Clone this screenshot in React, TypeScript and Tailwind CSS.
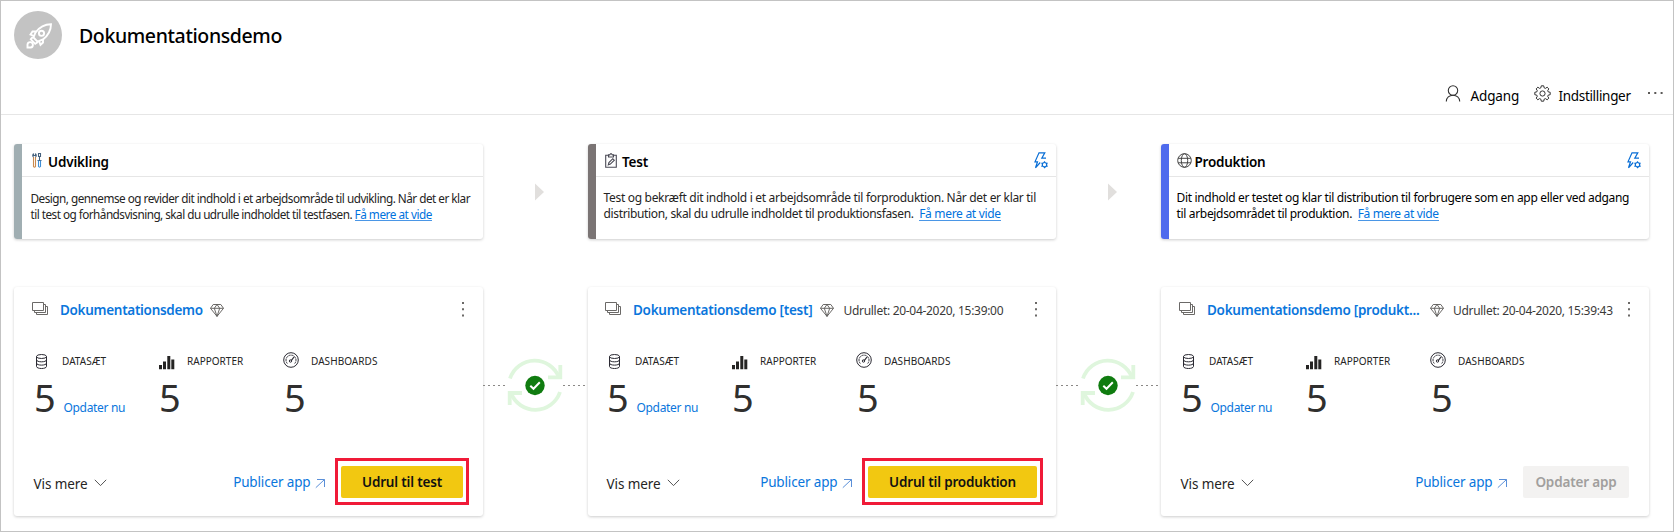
import type { ReactNode } from "react";

type Box = { className?: string };

const RocketIcon = () => (
  <svg width="26" height="26" viewBox="0 0 26 26" fill="none" stroke="#fff" strokeWidth="1.900" className="mt-px ml-px">
    <path d="M25 1.200C18.500 1.200 13.500 4 9.500 9.500L7.500 14.500L11.500 18.700L17 16.500C22.500 12 25 7 25 1.200Z" />
    <circle cx="15.500" cy="10.300" r="2.600" />
    <path d="M10.500 8.500H6.500L4.500 11.500L8 13M17 16.500V19.500L14.500 21.800L13 18" />
    <path d="M6.800 13.800L4.800 16.300L9.200 20.800L12 19" />
    <path d="M1.500 24.500V21.500A2.700 2.700 0 1 1 4.500 24.500Z" />
  </svg>
);

const PersonIcon = ({ className }: Box) => (
  <svg width="16" height="17" viewBox="0 0 16 17" fill="none" stroke="#333" strokeWidth="1.1" className={className}>
    <circle cx="8" cy="5.500" r="4.700" />
    <path d="M1.300 16.500C1.300 12.700 4.300 10.200 8 10.200S14.700 12.700 14.700 16.500" />
  </svg>
);

const GearIcon = ({ className }: Box) => (
  <svg width="17" height="17" viewBox="0 0 17 17" fill="none" stroke="#333" strokeWidth="1" className={className}>
    <path d="M7.300 0.800H9.700L10.200 2.900L11.400 3.400L13.200 2.200L14.800 3.900L13.700 5.700L14.100 6.800L16.200 7.300V9.700L14.100 10.200L13.700 11.300L14.800 13.100L13.200 14.800L11.400 13.600L10.200 14.100L9.700 16.200H7.300L6.800 14.100L5.600 13.600L3.800 14.800L2.200 13.100L3.300 11.300L2.900 10.200L0.800 9.700V7.300L2.900 6.800L3.300 5.700L2.200 3.900L3.800 2.200L5.600 3.400L6.800 2.900Z" />
    <circle cx="8.500" cy="8.500" r="2.600" />
  </svg>
);

const ToolsIcon = ({ className }: Box) => (
  <svg width="10" height="15" viewBox="0 0 10 15" fill="none" strokeWidth="1.100" className={className}>
    <path d="M1.500 4V13.500Q2.500 14.800 3.500 13.500V4" stroke="#c98a4e" />
    <path d="M1.500 0.500Q0 2.500 1.500 4.200M3.500 0.500Q5 2.500 3.500 4.200M1.500 0.500V2.500H3.500V0.500" stroke="#44617e" />
    <path d="M6.500 0.500H8.500V3.500H6.500ZM7.500 3.500V7.500M5.500 7.500H9.500" stroke="#44617e" />
    <path d="M6.500 7.500V13.500Q7.500 14.700 8.500 13.500V7.500" stroke="#3f8fd6" />
  </svg>
);

const ClipboardIcon = ({ className }: Box) => (
  <svg width="12" height="15" viewBox="0 0 12 15" fill="none" stroke="#4a4a55" strokeWidth="1.1" className={className}>
    <path d="M3.500 2.300H0.700V14.200H11.300V2.300H8.500" />
    <path d="M3.500 4V1.900H4.700Q6 -0.600 7.300 1.900H8.500V4Z" />
    <path d="M3.300 11.800L3.900 9.600L7.800 5.700L9.300 7.200L5.400 11.100Z" />
  </svg>
);

const GlobeIcon = ({ className }: Box) => (
  <svg width="15" height="15" viewBox="0 0 15 15" fill="none" stroke="#444" strokeWidth="1" className={className}>
    <circle cx="7.500" cy="7.500" r="6.800" />
    <ellipse cx="7.500" cy="7.500" rx="3.200" ry="6.800" />
    <path d="M1.200 5.300H13.800M1.200 9.800H13.800" />
  </svg>
);

const BoltGearIcon = () => (
  <svg width="15" height="17" viewBox="0 0 15 17" fill="none" stroke="#0a6fd6" strokeWidth="1.200" className="mt-2 mr-[7px]">
    <path d="M6.200 10.500L1.500 15.800L3.500 9.800H1L5 0.800H10.800L7.800 6.200H12" />
    <circle cx="10.500" cy="12.700" r="2.200" />
    <path d="M10.500 9.200V10.500M10.500 14.900V16.200M7.400 10.900L8.600 11.600M12.400 13.800L13.600 14.500M13.600 10.900L12.400 11.600M8.600 13.800L7.400 14.500" />
  </svg>
);

const LayersIcon = () => (
  <svg width="17" height="14" viewBox="0 0 17 14" fill="none" stroke="#6b6967" strokeWidth="1" className="mt-0.5">
    <path d="M0.500 0.500H11.500V8.500H0.500Z" />
    <path d="M11.500 2.500H13.500V10.500H2.500V8.500" />
    <path d="M13.500 4.500H15.500V12.500H4.500V10.500" />
  </svg>
);

const DiamondIcon = () => (
  <svg width="14" height="13" viewBox="0 0 14 13" fill="none" stroke="#5b5957" strokeWidth="0.900" strokeLinejoin="round" className="mt-1 block">
    <path d="M3.200 0.500H10.800L13.500 4.300L7 12.400L0.500 4.300ZM0.500 4.300H13.500M7 12.400L4.300 4.300L7 0.500L9.700 4.300Z" />
  </svg>
);

const DatabaseIcon = () => (
  <svg width="12" height="15" viewBox="0 0 12 15" fill="none" stroke="#2b2a33" strokeWidth="1" className="mt-px">
    <ellipse cx="5.500" cy="2.500" rx="5" ry="2" />
    <path d="M0.500 2.500V12.400C0.500 15.200 10.500 15.200 10.500 12.400V2.500M0.500 5.800C0.500 8.500 10.500 8.500 10.500 5.800M0.500 9.100C0.500 11.800 10.500 11.800 10.500 9.100" />
  </svg>
);

const BarsIcon = () => (
  <svg width="16" height="14" viewBox="0 0 16 14" fill="#252423" className="mt-[3px]">
    <path d="M0 9H3V13.300H0ZM4 5.500H7V13.300H4ZM8.300 0H11.300V13.300H8.300ZM12.300 3.500H15.300V13.300H12.300Z" />
  </svg>
);

const GaugeIcon = () => (
  <svg width="16" height="16" viewBox="0 0 16 16" fill="none" stroke="#2b2a33" strokeWidth="1" className="-mt-px -ml-px">
    <circle cx="8" cy="8" r="7.300" />
    <path d="M4.300 11.500A5 5 0 1 1 11.700 11.500" strokeDasharray="2.200 0.700" />
    <path d="M8 8.800L11 5" strokeWidth="1.200" />
    <circle cx="7.500" cy="9" r="1.200" />
  </svg>
);

const ChevronIcon = () => (
  <svg width="13" height="8" viewBox="0 0 13 8" fill="none" stroke="#555" strokeWidth="1" className="mt-[3px] -ml-px">
    <path d="M0.800 0.800L6.500 6.600L12.200 0.800" />
  </svg>
);

const OpenIcon = () => (
  <svg width="11" height="11" viewBox="0 0 11 11" fill="none" stroke="#5a8fd8" strokeWidth="1" className="mt-1 ml-1">
    <path d="M0.800 9.700L9.500 1.500M2 1.500H9.500V9" />
  </svg>
);

const Kebab = () => (
  <svg width="2" height="15" viewBox="0 0 2 15" fill="#6b6967" className="mt-[1.5px]">
    <path d="M0 0H2V2H0ZM0 6.300H2V8.300H0ZM0 12.600H2V14.600H0Z" />
  </svg>
);

const NextArrow = () => (
  <div className="flex w-[105px] shrink-0 pt-[39px] pl-[52px]">
    <svg width="9" height="18" viewBox="0 0 9 18" fill="#e1dfdd">
      <path d="M0 0.500L9 9L0 17.500Z" />
    </svg>
  </div>
);

const Dashes = () => (
  <svg width="24" height="1" viewBox="0 0 24 1" className="shrink-0">
    <path d="M0 0.500H22" stroke="#8a8886" strokeWidth="1" strokeDasharray="2 3" />
  </svg>
);

const SyncConnector = () => (
  <div className="flex h-14 w-[105px] shrink-0 items-center mt-[70px]">
    <Dashes />
    <svg width="56" height="56" viewBox="0 0 56 56" fill="none" className="shrink-0">
      <g stroke="#dff6dd" strokeWidth="3.800">
        <path d="M3 21.500A26 26 0 0 1 52 20.500" />
        <path d="M53.300 8V20.300H41" />
        <path d="M53 35A26 26 0 0 1 4 36" />
        <path d="M2.700 48V36H15" />
      </g>
      <circle cx="28" cy="28.500" r="9.700" fill="#107c10" />
      <path d="M23.300 28.700L26.500 31.800L32.800 25.300" stroke="#fff" strokeWidth="2" />
    </svg>
    <Dashes />
  </div>
);

type StageProps = {
  width: string;
  stripe: string;
  icon: ReactNode;
  title: ReactNode;
  auto?: boolean;
  body: string;
  children: ReactNode;
};

const StageCard = ({ width, stripe, icon, title, auto, body, children }: StageProps) => (
  <section className={`flex h-[95px] shrink-0 overflow-hidden rounded-[3px] bg-white shadow-[0_1px_3px_rgba(0,0,0,0.2)] ${width}`}>
    <div className={`w-2 shrink-0 ${stripe}`} />
    <div className="min-w-0 flex-1">
      <div className="flex h-[33px] justify-between border-b border-[#e6e6e6]">
        <div className="flex">
          {icon}
          <h2 className="mt-2 text-[13.5px] leading-5 font-[560] text-black">{title}</h2>
        </div>
        {auto && <BoltGearIcon />}
      </div>
      <div className={`pt-[13px] leading-4 whitespace-pre text-[#252423] ${body}`}>{children}</div>
    </div>
  </section>
);

const MoreLink = ({ className }: Box) => (
  <a className={`inline-block h-[15px] border-b border-[#4a96e6] align-top leading-4 text-[#0072dd] ${className}`}>Få mere at vide</a>
);

const Stat = ({ icon, iconBox, label, labelClass, children }: { icon: ReactNode; iconBox: string; label: string; labelClass: string; children?: ReactNode }) => (
  <div className="w-[125px]">
    <div className="flex h-6">
      <div className={`shrink-0 ${iconBox}`}>{icon}</div>
      <span className={`text-[10px] leading-[17px] text-[#252423] ${labelClass}`}>{label}</span>
    </div>
    <div className="flex">
      <span className="-ml-[2px] w-[29.5px] text-[38px] leading-10 font-[370] text-[#302f2e]">5</span>
      {children}
    </div>
  </div>
);

type WorkspaceProps = {
  width: string;
  indent: string;
  titleBox: string;
  title: ReactNode;
  deployed?: string;
  kebabBox: string;
  action: ReactNode;
};

const WorkspaceCard = ({ width, indent, titleBox, title, deployed, kebabBox, action }: WorkspaceProps) => (
  <section className={`flex h-[229px] shrink-0 flex-col rounded-[3px] bg-white shadow-[0_1px_3px_rgba(0,0,0,0.2)] ${width} ${indent}`}>
    <div className={`flex h-[66px] justify-between pt-[13px] ${kebabBox}`}>
      <div className="flex">
        <LayersIcon />
        <h3 className={`ml-[11px] text-[13.5px] leading-5 font-[560] whitespace-nowrap text-[#0a76dc] ${titleBox}`}>{title}</h3>
        <DiamondIcon />
        {deployed && <span className="ml-[9.500px] pt-px text-[12px] leading-5 tracking-[-0.3px] whitespace-nowrap text-[#3b3a39]">{deployed}</span>}
      </div>
      <Kebab />
    </div>
    <div className="flex pl-1">
      <Stat icon={<DatabaseIcon />} iconBox="w-[26px]" label="DATASÆT" labelClass="tracking-[0.03px]">
        <span className="pt-[23px] text-[12px] leading-4 tracking-[-0.33px] text-[#0a76dc]">Opdater nu</span>
      </Stat>
      <Stat icon={<BarsIcon />} iconBox="-ml-[2px] w-[28px]" label="RAPPORTER" labelClass="tracking-[0.02px]" />
      <Stat icon={<GaugeIcon />} iconBox="-ml-[2px] w-[27px]" label="DASHBOARDS" labelClass="tracking-[0.06px]" />
    </div>
    <div className="mt-[41px] flex h-[47px] items-center justify-between">
      <div className="flex items-center pl-[1.500px]">
        <span className="w-[61px] pt-1 text-[13.5px] leading-5 tracking-[-0.1px] text-[#252423]">Vis mere</span>
        <ChevronIcon />
      </div>
      <div className="flex items-center">
        <span className="text-[13.5px] leading-5 tracking-[-0.15px] text-[#0a76dc]">Publicer app</span>
        <OpenIcon />
        {action}
      </div>
    </div>
  </section>
);

const DeployButton = ({ className, children }: { className: string; children: ReactNode }) => (
  <div className={`ml-[9.500px] h-[47px] border-[3px] border-[#f01a38] pt-[5px] pl-[3px] ${className}`}>
    <button className="block h-8 w-[calc(100%-3px)] rounded-[2px] bg-[#f2c811] text-[13.5px] leading-8 font-[560] whitespace-nowrap text-[#111]">{children}</button>
  </div>
);

export default function App() {
  return (
    <div className="h-[532px] w-[1674px] overflow-hidden border border-[#c3c3c3] bg-white font-['Noto_Sans',sans-serif]">
      <header className="h-[114px] border-b border-[#e6e6e6]">
        <div className="flex pt-[10px] pl-[13px]">
          <div className="flex size-12 items-center justify-center rounded-full bg-[#c3c3c3]">
            <RocketIcon />
          </div>
          <h1 className="mt-[11px] ml-[17px] text-[19.5px] leading-7 font-[530] tracking-[-0.38px] text-black">Dokumentationsdemo</h1>
        </div>
        <div className="mt-[26px] flex justify-end pr-[10px] text-[13.5px] leading-5 text-black">
          <PersonIcon className="mr-[9.500px]" />
          <span className="w-[63.500px] pt-px tracking-[-0.15px]">Adgang</span>
          <GearIcon className="mr-[7.500px]" />
          <span className="w-[89.500px] pt-px tracking-[-0.32px]">Indstillinger</span>
          <svg width="15" height="2" viewBox="0 0 15 2" fill="#5b5957" className="mt-[7px]">
            <path d="M0 0H2V2H0ZM6.300 0H8.300V2H6.300ZM12.600 0H14.600V2H12.600Z" />
          </svg>
        </div>
      </header>

      <div className="flex pt-[29px] pl-[13px]">
        <StageCard width="w-[469px]" stripe="bg-[#a0aeb2]" icon={<ToolsIcon className="mt-[9px] mr-[6px] ml-[10px]" />} title={<span className="tracking-[-0.17px]">Udvikling</span>} body="pl-[8.500px] text-[11.75px]">
          <div className="tracking-[-0.51px]">Design, gennemse og revider dit indhold i et arbejdsområde til udvikling. Når det er klar</div>
          <div>
            <span className="tracking-[-0.53px]">til test og forhåndsvisning, skal du udrulle indholdet til testfasen. </span>
            <MoreLink className="tracking-[-0.47px]" />
          </div>
        </StageCard>
        <NextArrow />
        <StageCard width="w-[468px]" stripe="bg-[#7a7474]" icon={<ClipboardIcon className="mt-[9px] mr-[5px] ml-[9px]" />} title={<span className="tracking-[-0.2px]">Test</span>} auto body="pl-[7.500px] text-[12px]">
          <div className="tracking-[-0.31px]">Test og bekræft dit indhold i et arbejdsområde til forproduktion. Når det er klar til</div>
          <div>
            <span className="tracking-[-0.35px]">distribution, skal du udrulle indholdet til produktionsfasen.  </span>
            <MoreLink className="tracking-[-0.3px]" />
          </div>
        </StageCard>
        <NextArrow />
        <StageCard width="w-[488px]" stripe="bg-[#4f6bed]" icon={<GlobeIcon className="mt-[9px] mr-[3px] ml-[7.500px]" />} title={<span className="tracking-[-0.25px]">Produktion</span>} auto body="pl-[7.500px] text-[12px]">
          <div className="tracking-[-0.33px] text-black">Dit indhold er testet og klar til distribution til forbrugere som en app eller ved adgang</div>
          <div>
            <span className="tracking-[-0.33px] text-black">til arbejdsområdet til produktion.  </span>
            <MoreLink className="tracking-[-0.34px]" />
          </div>
        </StageCard>
      </div>

      <div className="flex pt-12 pl-[13px]">
        <WorkspaceCard
          width="w-[469px]"
          indent="pl-[18px]"
          titleBox="w-[149.500px] tracking-[-0.3px]"
          title="Dokumentationsdemo"
          kebabBox="pr-[19px]"
          action={<DeployButton className="w-[134px] mr-[14px]"><span className="tracking-[-0.18px]">Udrul til test</span></DeployButton>}
        />
        <SyncConnector />
        <WorkspaceCard
          width="w-[468px]"
          indent="pl-[17px]"
          titleBox="w-[187px] tracking-[-0.27px]"
          title="Dokumentationsdemo [test]"
          deployed="Udrullet: 20-04-2020, 15:39:00"
          kebabBox="pr-[19px]"
          action={<DeployButton className="w-[181px] mr-[13px]"><span className="tracking-[-0.19px]">Udrul til produktion</span></DeployButton>}
        />
        <SyncConnector />
        <WorkspaceCard
          width="w-[488px]"
          indent="pl-[18px]"
          titleBox="w-[222.500px] tracking-[-0.26px]"
          title="Dokumentationsdemo [produkt..."
          deployed="Udrullet: 20-04-2020, 15:39:43"
          kebabBox="pr-[19px]"
          action={<button className="ml-[15.500px] mr-5 h-8 w-[106px] rounded-[2px] bg-[#f3f2f1] text-[13.5px] leading-8 font-[560] tracking-[-0.16px] whitespace-nowrap text-[#a19f9d]">Opdater app</button>}
        />
      </div>
    </div>
  );
}
